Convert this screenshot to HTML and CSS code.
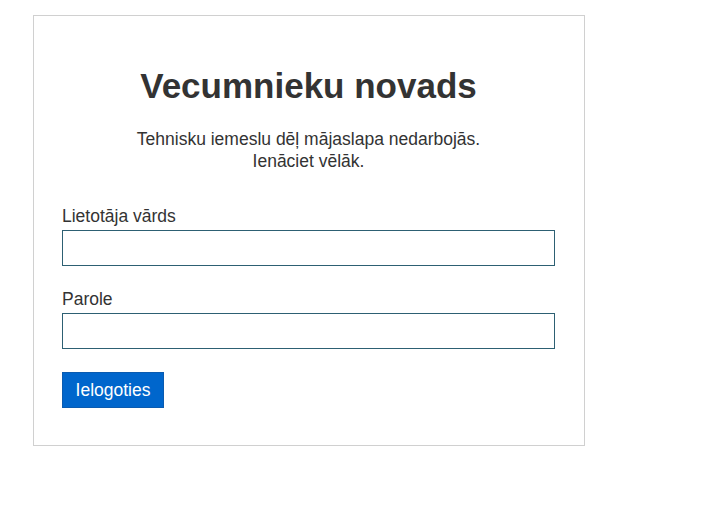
FILE: index.html
```html
<!DOCTYPE html>
<html lang="lv">
<head>
<meta charset="utf-8">
<title>Vecumnieku novads</title>
<link rel="stylesheet" href="styles.css">
</head>
<body>
<div class="card">
  <h1 class="title">Vecumnieku novads</h1>
  <p class="notice">Tehnisku iemeslu dēļ mājaslapa nedarbojās.<br>Ienāciet vēlāk.</p>
  <form class="form">
    <div class="field">
      <label class="label" for="user">Lietotāja vārds</label>
      <input class="input" id="user" type="text">
    </div>
    <div class="field">
      <label class="label" for="pass">Parole</label>
      <input class="input" id="pass" type="password">
    </div>
    <div class="actions">
      <button class="button" type="button">Ielogoties</button>
    </div>
  </form>
</div>
</body>
</html>
```

FILE: styles.css
```css
html, body {
  margin: 0;
  padding: 0;
  background: #fff;
}
body {
  padding: 15px 0 0 33px;
  font-family: "Liberation Sans", Arial, sans-serif;
  color: #333;
}
.card {
  width: 493px;
  border: 1px solid #d0d0d0;
  padding: 52px 29px 37px 28px;
  display: flex;
  flex-direction: column;
}
.title {
  margin: 0;
  font-size: 35px;
  line-height: 36px;
  font-weight: bold;
  text-align: center;
  color: #333;
}
.notice {
  margin: 24px 0 0;
  font-size: 17.5px;
  line-height: 22px;
  text-align: center;
  color: #333;
}
.form {
  display: flex;
  flex-direction: column;
  margin-top: 34px;
  gap: 23px;
}
.field {
  display: flex;
  flex-direction: column;
  gap: 4px;
}
.label {
  font-size: 17.5px;
  line-height: 20px;
  color: #333;
}
.input {
  box-sizing: border-box;
  width: 493px;
  height: 36px;
  margin: 0;
  border: 1px solid #2d6073;
  padding: 4px 8px;
  font-size: 16px;
  background: #fff;
}
.actions {
  display: flex;
}
.button {
  box-sizing: border-box;
  height: 36px;
  width: 102px;
  border: 1px solid #0a5bb0;
  background: #0066cc;
  color: #fff;
  font-family: "Liberation Sans", Arial, sans-serif;
  font-size: 17.5px;
  padding: 0;
  margin: 0;
  cursor: pointer;
}
```
